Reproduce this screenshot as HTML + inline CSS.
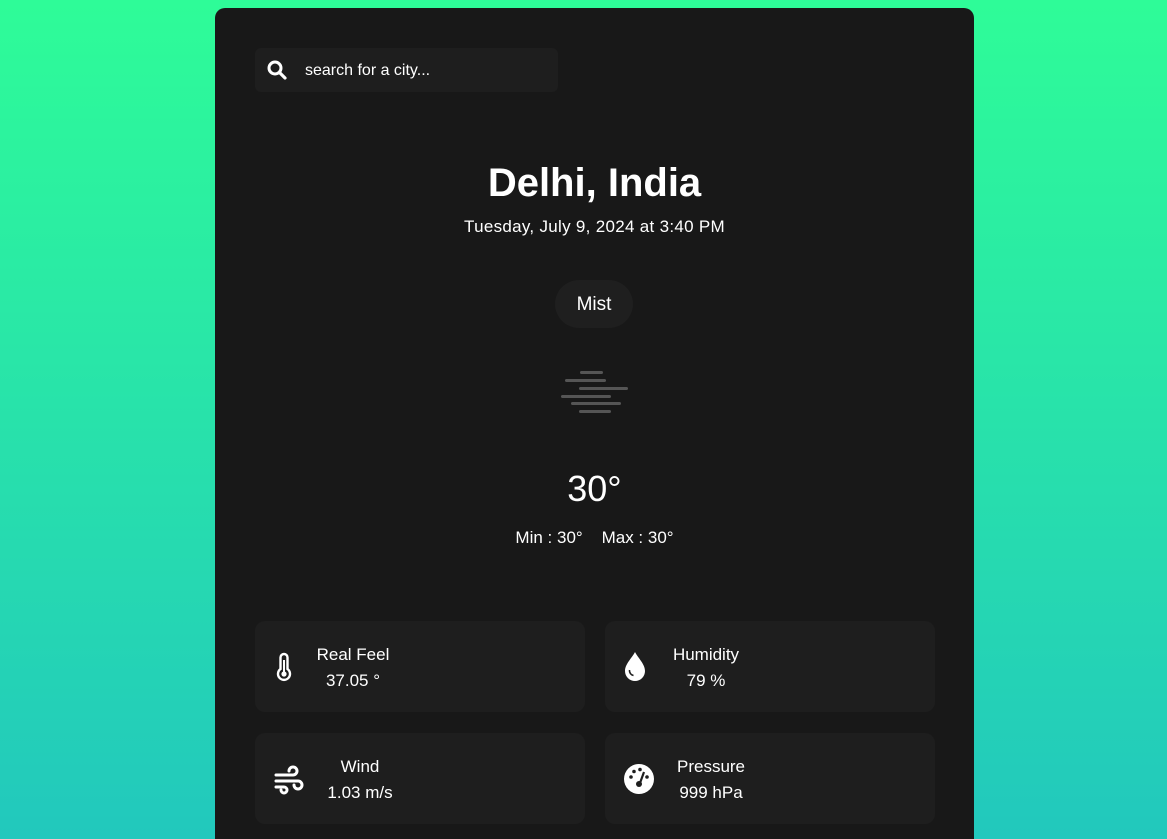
<!DOCTYPE html>
<html><head><meta charset="utf-8"><style>
*{margin:0;padding:0;box-sizing:border-box}
html,body{width:1167px;height:839px;overflow:hidden}
body{background:linear-gradient(180deg,#2efc98 0%,#22c8bd 100%);font-family:"Liberation Sans",sans-serif;color:#fff;position:relative}
.main{position:absolute;left:215px;top:8px;width:759px;height:850px;background:#181818;border-radius:10px}
.abs{position:absolute}
.search{left:40px;top:40px;width:303px;height:44px;background:#1e1e1e;border-radius:6px}
.search span{position:absolute;left:50px;top:14px;font-size:16px;color:#fff}
.c{position:absolute;left:0;width:759px;text-align:center}
.pill{left:340px;top:272px;width:78px;height:48px;background:#1f1f1f;border-radius:24px;text-align:center;line-height:50px;font-size:19px}
.fog{position:absolute;height:3px;background:#555;border-radius:2px}
.card{position:absolute;width:330px;height:91px;background:#1e1e1e;border-radius:10px}
.card .t{position:absolute;font-size:17px;text-align:center;line-height:26px}
</style></head><body>
<div class="main">
<div class="abs search">
<svg class="abs" style="left:12px;top:12px" width="20" height="20" viewBox="0 0 20 20"><circle cx="8" cy="8" r="6" fill="none" stroke="#fff" stroke-width="3"/><line x1="12.5" y1="12.5" x2="18" y2="18" stroke="#fff" stroke-width="3.2" stroke-linecap="round"/></svg>
<span>search for a city...</span></div>
<div class="c" style="top:153px;font-size:40px;font-weight:bold">Delhi, India</div>
<div class="c" style="top:209px;font-size:17px;letter-spacing:0.3px">Tuesday, July 9, 2024 at 3:40 PM</div>
<div class="abs pill">Mist</div>
<div class="fog" style="left:365px;top:363px;width:23px"></div>
<div class="fog" style="left:350px;top:371px;width:41px"></div>
<div class="fog" style="left:364px;top:379px;width:49px"></div>
<div class="fog" style="left:346px;top:387px;width:50px"></div>
<div class="fog" style="left:356px;top:394px;width:50px"></div>
<div class="fog" style="left:364px;top:402px;width:32px"></div>
<div class="c" style="top:460px;font-size:36px">30°</div>
<div class="c" style="top:520px;font-size:17px">Min : 30° &nbsp;&nbsp;&nbsp;Max : 30°</div>

<div class="card" style="left:40px;top:613px">
<svg class="abs" style="left:20px;top:30px" width="18" height="32" viewBox="0 0 18 32"><path d="M9 3a3.5 3.5 0 0 1 3.5 3.5V18a6 6 0 1 1-7 0V6.5A3.5 3.5 0 0 1 9 3z" fill="none" stroke="#fff" stroke-width="2.4"/><circle cx="9" cy="23" r="2.6" fill="#fff"/><rect x="8" y="9" width="2" height="13" fill="#fff"/></svg>
<div class="t" style="left:58px;top:21px;width:80px">Real Feel<br>37.05 °</div></div>
<div class="card" style="left:390px;top:613px">
<svg class="abs" style="left:18px;top:30px" width="24" height="32" viewBox="0 0 24 32"><path d="M12 1C9 7 2 13 2 20a10 10 0 0 0 20 0C22 13 15 7 12 1z" fill="#fff"/><path d="M6.5 19a5 5 0 0 0 4 5.5" stroke="#1e1e1e" stroke-width="1.6" fill="none"/></svg>
<div class="t" style="left:60px;top:21px;width:82px">Humidity<br>79 %</div></div>
<div class="card" style="left:40px;top:725px">
<svg class="abs" style="left:18px;top:32px" width="32" height="30" viewBox="0 0 32 30"><g fill="none" stroke="#fff" stroke-width="3" stroke-linecap="round"><path d="M3 10h17a4 4 0 1 0-4-4"/><path d="M3 16h22a4 4 0 1 1-4 4"/><path d="M3 22h8a3 3 0 1 1-3 3"/></g></svg>
<div class="t" style="left:60px;top:21px;width:90px">Wind<br>1.03 m/s</div></div>
<div class="card" style="left:390px;top:725px">
<svg class="abs" style="left:18px;top:30px" width="32" height="32" viewBox="0 0 32 32"><circle cx="16" cy="16" r="15" fill="#fff"/><circle cx="8" cy="14" r="1.8" fill="#1e1e1e"/><circle cx="11" cy="8.5" r="1.8" fill="#1e1e1e"/><circle cx="17" cy="6.5" r="1.8" fill="#1e1e1e"/><circle cx="24" cy="14" r="1.8" fill="#1e1e1e"/><path d="M21 9l-4 11" stroke="#1e1e1e" stroke-width="2.2"/><circle cx="16" cy="21" r="3" fill="#1e1e1e"/></svg>
<div class="t" style="left:62px;top:21px;width:88px">Pressure<br>999 hPa</div></div>
</div>
</body></html>
